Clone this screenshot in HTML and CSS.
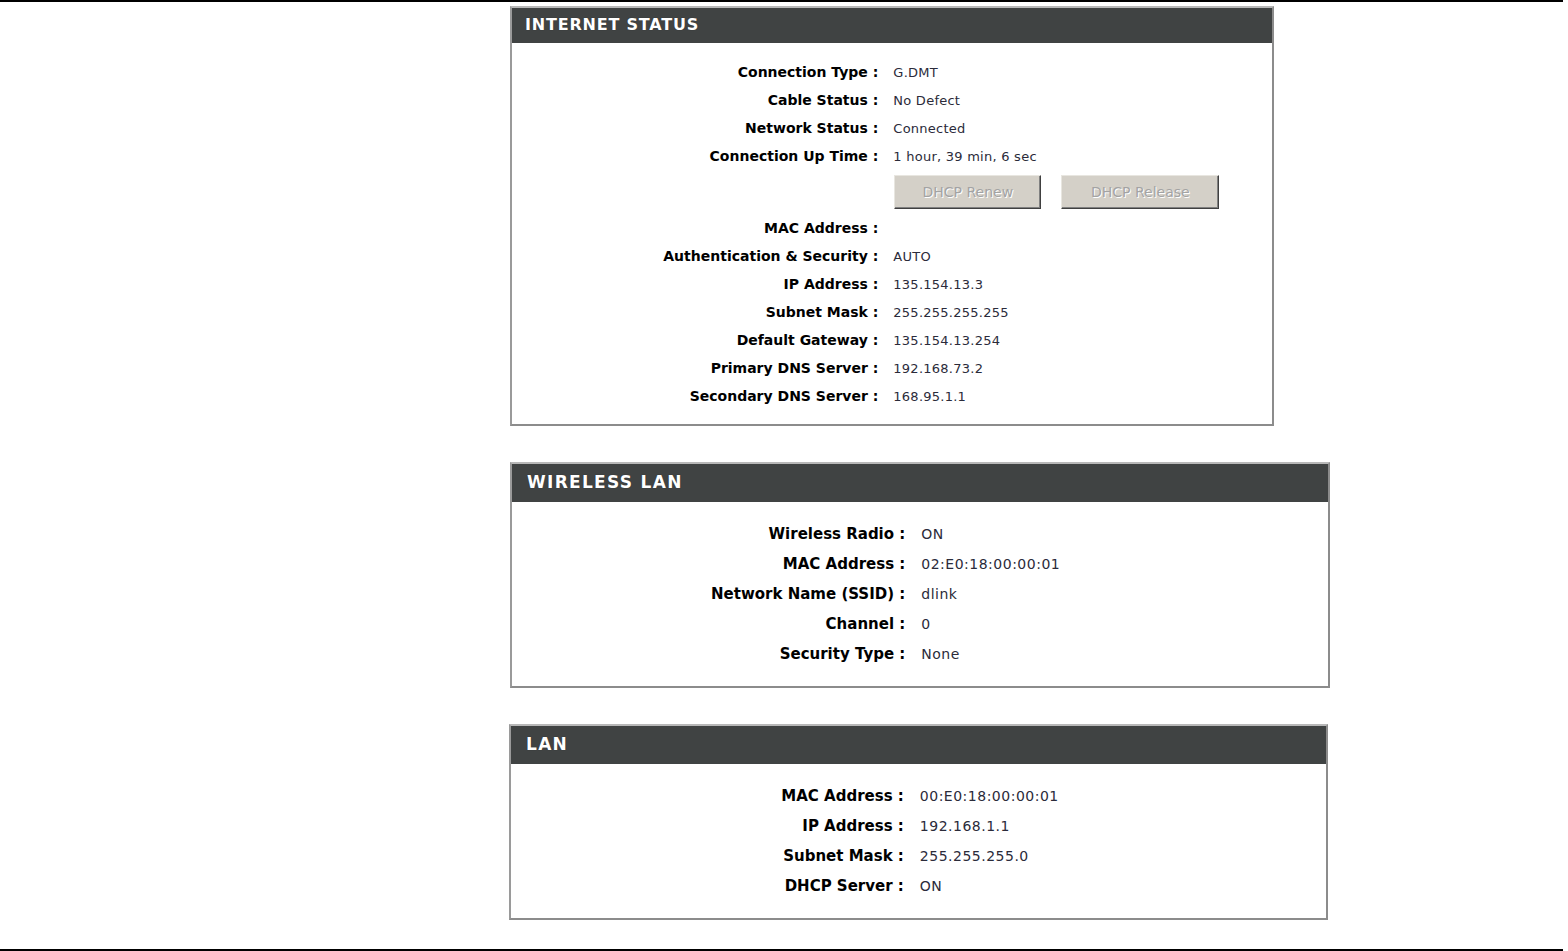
FILE: index.html
```html
<!DOCTYPE html>
<html>
<head>
<meta charset="utf-8">
<link rel="stylesheet" href="styles.css">
</head>
<body>
<div class="page">
  <div class="rule"></div>
  <div class="content">
    <section class="panel panel-inet">
      <h2 class="panel-title">INTERNET STATUS</h2>
      <div class="panel-body">
        <div class="row"><span class="lbl">Connection Type :</span><span class="val">G.DMT</span></div>
        <div class="row"><span class="lbl">Cable Status :</span><span class="val">No Defect</span></div>
        <div class="row"><span class="lbl">Network Status :</span><span class="val">Connected</span></div>
        <div class="row"><span class="lbl">Connection Up Time :</span><span class="val">1 hour, 39 min, 6 sec</span></div>
        <div class="row row-btns"><span class="lbl"></span><span class="val btns"><button class="btn btn-renew" disabled>DHCP Renew</button><button class="btn btn-release" disabled>DHCP Release</button></span></div>
        <div class="row"><span class="lbl">MAC Address :</span><span class="val"></span></div>
        <div class="row"><span class="lbl">Authentication &amp; Security :</span><span class="val">AUTO</span></div>
        <div class="row"><span class="lbl">IP Address :</span><span class="val">135.154.13.3</span></div>
        <div class="row"><span class="lbl">Subnet Mask :</span><span class="val">255.255.255.255</span></div>
        <div class="row"><span class="lbl">Default Gateway :</span><span class="val">135.154.13.254</span></div>
        <div class="row"><span class="lbl">Primary DNS Server :</span><span class="val">192.168.73.2</span></div>
        <div class="row"><span class="lbl">Secondary DNS Server :</span><span class="val">168.95.1.1</span></div>
      </div>
    </section>

    <section class="panel panel-lg panel-wlan">
      <h2 class="panel-title">WIRELESS LAN</h2>
      <div class="panel-body">
        <div class="row"><span class="lbl">Wireless Radio :</span><span class="val">ON</span></div>
        <div class="row"><span class="lbl">MAC Address :</span><span class="val">02:E0:18:00:00:01</span></div>
        <div class="row"><span class="lbl">Network Name (SSID) :</span><span class="val">dlink</span></div>
        <div class="row"><span class="lbl">Channel :</span><span class="val">0</span></div>
        <div class="row"><span class="lbl">Security Type :</span><span class="val">None</span></div>
      </div>
    </section>

    <section class="panel panel-lg panel-lan">
      <h2 class="panel-title">LAN</h2>
      <div class="panel-body">
        <div class="row"><span class="lbl">MAC Address :</span><span class="val">00:E0:18:00:00:01</span></div>
        <div class="row"><span class="lbl">IP Address :</span><span class="val">192.168.1.1</span></div>
        <div class="row"><span class="lbl">Subnet Mask :</span><span class="val">255.255.255.0</span></div>
        <div class="row"><span class="lbl">DHCP Server :</span><span class="val">ON</span></div>
      </div>
    </section>
  </div>
  <div class="rule rule-bottom"></div>
</div>
</body>
</html>
```

FILE: styles.css
```css
html, body {
  margin: 0;
  padding: 0;
  background: #fff;
}
body {
  font-family: "DejaVu Sans", Verdana, sans-serif;
  color: #000;
}
.page {
  width: 1568px;
  height: 951px;
  display: flex;
  flex-direction: column;
}
.rule {
  width: 1563px;
  height: 0;
  border-top: 2px solid #000;
}
.rule-bottom {
  margin-top: 29px;
}
.content {
  display: flex;
  flex-direction: column;
  padding-left: 510px;
  padding-top: 4px;
}
.panel {
  border: 2px solid #8c8c8c;
  border-top-color: #b8b8b8;
  border-left-color: #9a9a9a;
  background: #fff;
}
.panel-inet {
  width: 760px;
}
.panel-wlan {
  width: 816px;
  margin-top: 36px;
}
.panel-lan {
  width: 815px;
  margin-top: 36px;
  margin-left: -1px;
}
.panel-title {
  margin: 0;
  background: #404343;
  color: #fff;
  font-size: 16px;
  font-weight: bold;
  letter-spacing: 0.8px;
  height: 35px;
  line-height: 34px;
  padding-left: 13px;
  text-shadow: 0 0 1px rgba(0,0,0,0.4);
}
.panel-body {
  padding: 15px 0 14px;
  display: flex;
  flex-direction: column;
}
.row {
  display: grid;
  grid-template-columns: 48.2% 1fr;
  column-gap: 15px;
  height: 28px;
  align-items: center;
}
.lbl {
  text-align: right;
  font-weight: bold;
  font-size: 14px;
  white-space: nowrap;
}
.val {
  font-size: 13px;
  letter-spacing: 0.25px;
  color: #2b2b3a;
  white-space: nowrap;
}
.row-btns {
  height: 44px;
}
.btns {
  display: flex;
  gap: 20px;
  padding-left: 1px;
  letter-spacing: 0;
}
.btn {
  font-family: "DejaVu Sans", Verdana, sans-serif;
  font-size: 14px;
  height: 34px;
  background: #d4d0c8;
  color: #a3a3a3;
  text-shadow: 1px 1px 0 #fff;
  border: 1px solid;
  border-color: #e8e6e0 #404040 #404040 #e8e6e0;
  box-shadow: inset -1px -1px 0 #808080;
  padding: 0;
}
.btn-renew {
  width: 147px;
}
.btn-release {
  width: 158px;
}

/* Wireless & LAN panels are rendered a little larger */
.panel-lg .panel-title {
  font-size: 17px;
  letter-spacing: 1.3px;
  height: 38px;
  line-height: 37px;
  padding-left: 15px;
}
.panel-lg .panel-body {
  padding: 17px 0 17px;
}
.panel-lg .row {
  height: 30px;
  column-gap: 16px;
}
.panel-lg .lbl {
  font-size: 15px;
}
.panel-lg .val {
  font-size: 14px;
  letter-spacing: 0.5px;
}
```
